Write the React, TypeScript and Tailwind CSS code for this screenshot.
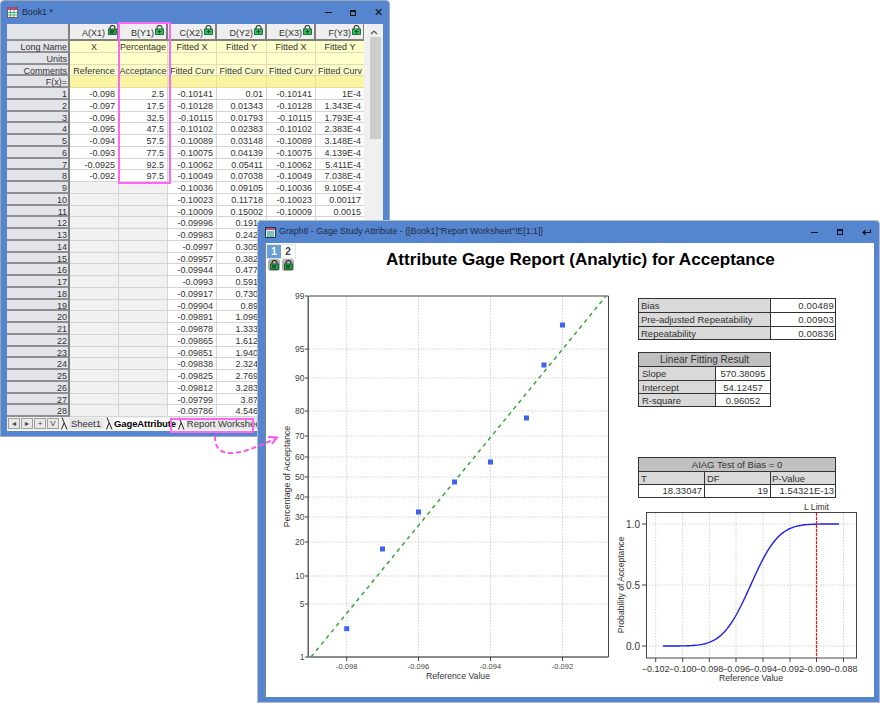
const ff = { fontFamily: '"Liberation Sans", Arial, sans-serif' };

const Lock = ({ dark = false }: { dark?: boolean }) => (
  <svg width="9" height="10" viewBox="0 0 9 10" className="shrink-0">
    <path d="M2 5V3a2.5 2.5 0 0 1 5 0v2" fill="none" stroke={dark ? '#222' : '#333'} strokeWidth="1.1" />
    <rect x="0.5" y="4" width="8" height="5.5" fill={dark ? '#27a04a' : '#2fc05a'} stroke="#14532d" strokeWidth="0.8" />
    {dark ? (
      <path d="M3 5v3.5M5 5v3.5" stroke="#111" strokeWidth="0.9" />
    ) : (
      <path d="M2.5 6.7h4M4.5 5v3.4" stroke="#0b3d1c" strokeWidth="0.9" />
    )}
  </svg>
);

const cols = ['w-[63px]', 'w-[49px]', 'w-[49px]', 'w-[49px]', 'w-[50px]', 'w-[49px]', 'w-[49px]'];

const headers = ['A(X1)', 'B(Y1)', 'C(X2)', 'D(Y2)', 'E(X3)', 'F(Y3)'];
const labels: [string, string[]][] = [
  ['Long Name', ['X', 'Percentage', 'Fitted X', 'Fitted Y', 'Fitted X', 'Fitted Y']],
  ['Units', ['', '', '', '', '', '']],
  ['Comments', ['Reference', 'Acceptance', 'Fitted Curv', 'Fitted Curv', 'Fitted Curv', 'Fitted Curv']],
];
const rows: string[][] = [
  ['-0.098', '2.5', '-0.10141', '0.01', '-0.10141', '1E-4'],
  ['-0.097', '17.5', '-0.10128', '0.01343', '-0.10128', '1.343E-4'],
  ['-0.096', '32.5', '-0.10115', '0.01793', '-0.10115', '1.793E-4'],
  ['-0.095', '47.5', '-0.10102', '0.02383', '-0.10102', '2.383E-4'],
  ['-0.094', '57.5', '-0.10089', '0.03148', '-0.10089', '3.148E-4'],
  ['-0.093', '77.5', '-0.10075', '0.04139', '-0.10075', '4.139E-4'],
  ['-0.0925', '92.5', '-0.10062', '0.05411', '-0.10062', '5.411E-4'],
  ['-0.092', '97.5', '-0.10049', '0.07038', '-0.10049', '7.038E-4'],
  ['', '', '-0.10036', '0.09105', '-0.10036', '9.105E-4'],
  ['', '', '-0.10023', '0.11718', '-0.10023', '0.00117'],
  ['', '', '-0.10009', '0.15002', '-0.10009', '0.0015'],
  ['', '', '-0.09996', '0.1910', '', ''],
  ['', '', '-0.09983', '0.2420', '', ''],
  ['', '', '-0.0997', '0.3050', '', ''],
  ['', '', '-0.09957', '0.3824', '', ''],
  ['', '', '-0.09944', '0.4770', '', ''],
  ['', '', '-0.0993', '0.5919', '', ''],
  ['', '', '-0.09917', '0.7307', '', ''],
  ['', '', '-0.09904', '0.897', '', ''],
  ['', '', '-0.09891', '1.0966', '', ''],
  ['', '', '-0.09878', '1.3332', '', ''],
  ['', '', '-0.09865', '1.6126', '', ''],
  ['', '', '-0.09851', '1.9406', '', ''],
  ['', '', '-0.09838', '2.3241', '', ''],
  ['', '', '-0.09825', '2.7691', '', ''],
  ['', '', '-0.09812', '3.2830', '', ''],
  ['', '', '-0.09799', '3.873', '', ''],
  ['', '', '-0.09786', '4.5469', '', ''],
];

const RowHead = ({ children, w = cols[0] }: { children?: React.ReactNode; w?: string }) => (
  <div className={`${w} shrink-0 h-full bg-[#e3e3ea] border-r-2 border-b-2 border-r-[#7f7f7f] border-b-[#8f8f8f] text-right pr-[1px] pt-[1px] text-[#333] leading-[10px]`}>
    {children}
  </div>
);

function Worksheet() {
  return (
    <div className="w-[357px] text-[9px] text-[#333]">
      <div className="flex h-[17px]">
        <RowHead />
        {headers.map((h, i) => (
          <div key={h} className={`${cols[i + 1]} shrink-0 h-full bg-[#eeeeee] border-r-2 border-b-2 border-r-[#7f7f7f] border-b-[#7f7f7f] flex items-start justify-end ${i === 0 ? 'gap-[3px] pr-0' : 'gap-[1px] pr-[2px]'} pt-[1px] leading-[10px]`}>
            <span className="mt-[3px]">{h}</span>
            <Lock dark={i === 0} />
          </div>
        ))}
      </div>
      {labels.map(([n, v]) => (
        <div key={n} className="flex h-[11.75px]">
          <RowHead>{n}</RowHead>
          {v.map((t, i) => (
            <div key={i} className={`${cols[i + 1]} shrink-0 h-full bg-[#ffffc9] border-r border-b border-[#dcdcb8] text-center pt-[1px] leading-[10px] whitespace-nowrap overflow-hidden`}>
              {t}
            </div>
          ))}
        </div>
      ))}
      <div className="flex h-[11.75px]">
        <RowHead>F(x)=</RowHead>
        {headers.map((h, i) => (
          <div key={h} className={`${cols[i + 1]} shrink-0 h-full bg-[#faf5a3] border-r border-b border-[#e4dfa0]`} />
        ))}
      </div>
      {rows.map((r, ri) => (
        <div key={ri} className="flex h-[11.75px]">
          <RowHead>{ri + 1}</RowHead>
          {r.map((t, i) => (
            <div key={i} className={`${cols[i + 1]} shrink-0 h-full border-r border-b border-[#d4d4d4] text-right pr-[3px] pt-[1px] leading-[10px] whitespace-nowrap overflow-hidden ${i < 2 && ri > 7 ? 'bg-[#f1f1f1]' : 'bg-white'}`}>
              {t}
            </div>
          ))}
        </div>
      ))}
    </div>
  );
}

const Slant = () => (
  <svg width="7" height="13" viewBox="0 0 7 13" className="shrink-0">
    <path d="M1 0.5L6 12.5M3 6L0.5 12.5" fill="none" stroke="#222" strokeWidth="1" />
  </svg>
);

function TabBar() {
  return (
    <div className="relative h-[14px] w-[357px] bg-[#f0f0f0] border-b border-white flex items-center text-[9.5px] text-[#333] pl-[1px] gap-[1px]">
      {['◂', '▸', '+', 'V'].map((t) => (
        <div key={t} className="w-[12px] h-[11px] bg-[#e8e8e8] border border-[#a0a0a0] flex items-center justify-center leading-none text-[8px] text-[#444]">
          {t}
        </div>
      ))}
      <div className="ml-[1px]"><Slant /></div>
      <div className="w-[34px] text-center leading-[11px] bg-[#e6e6e6]">Sheet1</div>
      <div className="ml-[2px]"><Slant /></div>
      <div className="w-[62px] text-center font-bold text-black bg-white leading-[11px] tracking-[-0.1px]">GageAttribute</div>
      <div className="ml-[1px]"><Slant /></div>
      <div className="w-[78px] h-[11px] text-center leading-[11px] bg-[#e6e6e6] whitespace-nowrap">Report Worksheet</div>
      <div className="absolute left-[163px] top-[1px] w-[84px] h-[15px] border-2 border-[#ff66f2]" />
    </div>
  );
}

const Bar = ({ title, icon, last }: { title: string; icon: React.ReactNode; last: React.ReactNode }) => (
  <div className="flex items-center h-full px-[7px] text-[8.8px] text-[#1d2b44]">
    {icon}
    <span className="ml-[3px] whitespace-nowrap">{title}</span>
    <div className="ml-auto flex items-center">{last}</div>
  </div>
);

const Minimize = () => <div className="w-[7px] h-[1px] bg-[#111]" />;
const Maximize = () => <div className="w-[6px] h-[6px] border border-[#111] border-t-2" />;

const Table = ({ children, className }: { children: React.ReactNode; className: string }) => (
  <div className={`border-b border-r border-[#333] border-l border-t text-[9.5px] text-[#333] leading-[13px] ${className}`}>{children}</div>
);

function Tables() {
  return (
    <>
      <Table className="w-[198px]">
        {[
          ['Bias', '0.00489'],
          ['Pre-adjusted Repeatability', '0.00903'],
          ['Repeatability', '0.00836'],
        ].map(([k, v], i) => (
          <div key={k} className={`flex h-[13.4px] ${i ? 'border-t border-[#333]' : ''}`}>
            <div className="w-[132px] bg-[#d9d9d9] border-r border-[#333] pl-[2px] whitespace-nowrap">{k}</div>
            <div className="flex-1 bg-white text-right pr-[1px] tracking-[0.2px]">{v}</div>
          </div>
        ))}
      </Table>
      <Table className="w-[133px] mt-[12px]">
        <div className="h-[14px] bg-[#c0c0c0] text-center border-b border-[#333] text-[10px]">Linear Fitting Result</div>
        {[
          ['Slope', '570.38095'],
          ['Intercept', '54.12457'],
          ['R-square', '0.96052'],
        ].map(([k, v], i) => (
          <div key={k} className={`flex h-[13px] ${i ? 'border-t border-[#333]' : ''}`}>
            <div className="w-[77px] bg-[#d9d9d9] border-r border-[#333] pl-[3px]">{k}</div>
            <div className="flex-1 bg-white text-center">{v}</div>
          </div>
        ))}
      </Table>
      <Table className="w-[198px] mt-[50px]">
        <div className="h-[14px] bg-[#c0c0c0] text-center border-b border-[#333]">AIAG Test of Bias = 0</div>
        <div className="flex h-[13px] bg-[#d9d9d9] border-b border-[#333]">
          <div className="w-[66px] border-r border-[#333] pl-[2px]">T</div>
          <div className="w-[66px] border-r border-[#333] pl-[2px]">DF</div>
          <div className="flex-1 pl-[1px]">P-Value</div>
        </div>
        <div className="flex h-[12px] bg-white leading-[12px]">
          <div className="w-[66px] border-r border-[#333] text-right pr-[2px]">18.33047</div>
          <div className="w-[66px] border-r border-[#333] text-right pr-[2px]">19</div>
          <div className="flex-1 text-right pr-[1px]">1.54321E-13</div>
        </div>
      </Table>
    </>
  );
}

// chart coordinates are page pixels; the viewBox starts at the graph client area's corner
const ox = 266;
const oy = 243;

function Charts() {
  const hy: [string, number][] = [
    ['99', 296], ['95', 349], ['90', 378], ['80', 411], ['70', 436], ['60', 457], ['50', 477],
    ['40', 497], ['30', 517], ['20', 542], ['10', 576], ['5', 604], ['1', 657],
  ];
  const vx: [string, number][] = [['-0.098', 346.7], ['-0.096', 418.5], ['-0.094', 490.5], ['-0.092', 562.5]];
  const pts = [[346.7, 628.7], [382.5, 549], [418.5, 512], [454.5, 482], [490.5, 462], [526.5, 418], [544, 365], [562.5, 325]];
  const t2x: [string, number][] = [['−0.102', 655.7], ['−0.100', 682.7], ['−0.098', 709.3], ['−0.096', 736], ['−0.094', 763], ['−0.092', 790], ['−0.090', 816.5], ['−0.088', 843.5]];
  const t2y: [string, number][] = [['1.0', 524], ['0.5', 585], ['0.0', 646]];

  const curve: string[] = [];
  for (let x = 663; x <= 839; x += 2) {
    const z = (x - 750.7) / 22;
    const p = 1 / (1 + Math.exp(-(1.5976 * z + 0.07056 * z * z * z)));
    curve.push(`${x},${(646 - 122 * p).toFixed(2)}`);
  }

  return (
    <svg width="608" height="454" viewBox={`${ox} ${oy} 608 454`} className="block" style={ff}>
      {/* probability plot */}
      {vx.map(([, x]) => <line key={x} x1={x} x2={x} y1={296} y2={657} stroke="#cfcfcf" strokeWidth="1" strokeDasharray="1.5 1.5" />)}
      {hy.slice(1, -1).map(([, y]) => <line key={y} x1={309} x2={608} y1={y} y2={y} stroke="#cfcfcf" strokeWidth="1" strokeDasharray="1.5 1.5" />)}
      <path d="M308.5 657V296H608.5V657Z" fill="none" stroke="#444" strokeWidth="1" />
      <path d="M308 296V657H608" fill="none" stroke="#777" strokeWidth="1.2" />
      {hy.map(([t, y]) => (
        <g key={t}>
          <line x1={305} x2={308} y1={y} y2={y} stroke="#444" strokeWidth="1" />
          <text x={304.5} y={y + 3} textAnchor="end" fontSize="8.5" fill="#444">{t}</text>
        </g>
      ))}
      {vx.map(([t, x]) => (
        <g key={t}>
          <line x1={x} x2={x} y1={657} y2={661} stroke="#444" strokeWidth="1" />
          <text x={x} y={669} textAnchor="middle" fontSize="7.5" fill="#444">{t}</text>
        </g>
      ))}
      <text x={458} y={679} textAnchor="middle" fontSize="8.7" fill="#333">Reference Value</text>
      <text x={0} y={0} transform="translate(289.5,476.5) rotate(-90)" textAnchor="middle" fontSize="8.7" fill="#333">Percentage of Acceptance</text>
      <line x1={311} y1={657} x2={606} y2={296} stroke="#3aa53a" strokeWidth="1.5" strokeDasharray="4 4" />
      {pts.map(([x, y]) => <rect key={x} x={x - 2.5} y={y - 2.5} width="5" height="5" fill="#3f62f5" />)}

      {/* acceptance curve */}
      {t2x.map(([t, x]) => <line key={t} x1={x} x2={x} y1={513} y2={658} stroke="#d0d0d0" strokeWidth="1" strokeDasharray="1.5 1.5" />)}
      {t2y.map(([t, y]) => <line key={t} x1={646} x2={856} y1={y} y2={y} stroke="#d0d0d0" strokeWidth="1" strokeDasharray="1.5 1.5" />)}
      <rect x={646.5} y={512.5} width={210} height={145.5} fill="none" stroke="#444" strokeWidth="1" />
      {t2y.map(([t, y]) => (
        <g key={t}>
          <line x1={642} x2={646} y1={y} y2={y} stroke="#444" strokeWidth="1" />
          <text x={640} y={y + 3.5} textAnchor="end" fontSize="10" fill="#333">{t}</text>
        </g>
      ))}
      {t2x.map(([t, x]) => (
        <g key={t}>
          <line x1={x} x2={x} y1={658} y2={662} stroke="#444" strokeWidth="1" />
          <text x={x} y={672} textAnchor="middle" fontSize="9" fill="#333">{t}</text>
        </g>
      ))}
      <text x={751} y={680.5} textAnchor="middle" fontSize="8.7" fill="#333">Reference Value</text>
      <text x={0} y={0} transform="translate(624,585) rotate(-90)" textAnchor="middle" fontSize="8.6" fill="#333">Probability of Acceptance</text>
      <text x={816.5} y={510} textAnchor="middle" fontSize="8.6" fill="#333">L Limit</text>
      <polyline points={curve.join(' ')} fill="none" stroke="#1f1fe8" strokeWidth="1.4" />
      <line x1={816.5} x2={816.5} y1={513} y2={658} stroke="#ff1010" strokeWidth="1.2" strokeDasharray="3 1" />
    </svg>
  );
}

export default function App() {
  return (
    <div className="relative w-[880px] h-[703px] overflow-hidden bg-white" style={ff}>
      {/* Book1 window */}
      <div className="absolute left-0 top-0 w-[390px] h-[437px] bg-[#5585cf] rounded-t-[4px] border border-[#9aa8bb] pt-[23px] pl-[6px]">
        <div className="absolute left-0 right-0 top-0 h-[23px]">
          <div className="flex items-center h-[23px] pl-[6px] pr-[6px] text-[8.8px] text-[#1d2b44]">
            <svg width="11" height="11" viewBox="0 0 11 11">
              <rect x="0.5" y="0.5" width="10" height="10" fill="#fff" stroke="#8a4a6a" />
              <rect x="0.5" y="0.5" width="10" height="2.5" fill="#b04d7a" />
              <path d="M0 5.5h11M0 8h11M3.5 3v8M7 3v8" stroke="#2f9a5a" strokeWidth="0.8" />
            </svg>
            <span className="ml-[4px]">Book1 *</span>
            <div className="ml-auto flex items-center gap-[18px]">
              <Minimize />
              <Maximize />
              <span className="text-[11px] leading-none text-[#111]">✕</span>
            </div>
          </div>
        </div>
        <div className="flex bg-[#f0f0f0] w-[376px]">
          <div>
            <Worksheet />
            <TabBar />
          </div>
          <div className="w-[19px] relative bg-[#f0f0f0] pt-[13px] pl-[6px]">
            <svg width="8" height="5" viewBox="0 0 8 5" className="absolute left-[6px] top-[6px]">
              <path d="M1 4l3-3 3 3" fill="none" stroke="#555" strokeWidth="1.2" />
            </svg>
            <div className="w-[11px] h-[102px] bg-[#cdcdcd]" />
          </div>
        </div>
        {/* pink selection around column B */}
        <div className="absolute left-[117px] top-[21px] w-[53px] h-[162px] border-2 border-[#ff66f2]" />
      </div>

      {/* Graph window */}
      <div className="absolute left-[257px] top-[220px] w-[623px] h-[483px] bg-[#5585cf] rounded-t-[4px] border border-[#b4bcc8]">
        <div className="h-[22px]">
          <Bar
            title="Graph8 - Gage Study Attribute - {[Book1]&quot;Report Worksheet&quot;!E[1:1]}"
            icon={
              <svg width="11" height="11" viewBox="0 0 11 11">
                <rect x="0.5" y="0.5" width="10" height="10" fill="#e8f4f4" stroke="#1f3a4a" />
                <rect x="1" y="1" width="9" height="2" fill="#c24d7a" />
                <path d="M2 5h7M2 7h7M2 9h7" stroke="#1a8a8a" />
              </svg>
            }
            last={
              <div className="flex items-center gap-[19px] pr-[1px]">
                <Minimize />
                <Maximize />
                <svg width="9" height="7" viewBox="0 0 9 7">
                  <path d="M8.5 0.5v3H1.5M3.5 1.2L1 3.5l2.5 2.3" fill="none" stroke="#111" strokeWidth="1.2" />
                </svg>
              </div>
            }
          />
        </div>
        <div className="relative ml-[7px] w-[609px] h-[454px] bg-white border-l border-[#888] overflow-hidden">
          <Charts />
          <div className="absolute left-0 top-[1px] flex border border-[#e4e4e4] text-[10px] font-bold">
            <div className="w-[14px] h-[13px] bg-[#6a9fd6] text-white text-center leading-[13px]">1</div>
            <div className="w-[14px] h-[13px] bg-white text-[#444] text-center leading-[13px]">2</div>
          </div>
          <div className="absolute left-[2px] top-[16px] flex gap-[2px]">
            {[0, 1].map((i) => (
              <div key={i} className="w-[12px] h-[12px] rounded-[3px] bg-[#b0b0b0] flex items-center justify-center">
                <Lock dark />
              </div>
            ))}
          </div>
          <div className="absolute left-[120px] top-[7px] text-[17.1px] leading-[20px] font-bold text-black whitespace-nowrap">
            Attribute Gage Report (Analytic) for Acceptance
          </div>
          <div className="absolute left-[372px] top-[55px]">
            <Tables />
          </div>
        </div>
      </div>

      {/* pink arrow linking the tab to the graph */}
      <svg width="70" height="30" viewBox="0 0 70 30" className="absolute left-[210px] top-[432px]">
        <path d="M5 4C5 12 7 21 20 21C35 21 48 14 65 7" fill="none" stroke="#ff55ee" strokeWidth="2" strokeDasharray="5 3" />
        <path d="M58 5L67 5.5L62 12" fill="none" stroke="#ff55ee" strokeWidth="2" />
      </svg>
    </div>
  );
}
